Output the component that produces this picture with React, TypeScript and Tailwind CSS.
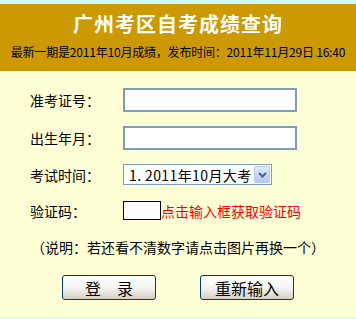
import React from "react";

const font = { fontFamily: '"Noto Sans CJK SC", "Noto Sans", sans-serif' };

function Label({ children }: { children: React.ReactNode }) {
  return <span className="w-[93px] shrink-0 text-[14px] leading-none text-black">{children}</span>;
}

function XpButton({ children }: { children: React.ReactNode }) {
  return (
    <button
      type="button"
      className="flex h-[25px] w-[94px] items-center justify-center rounded-[3px] border border-[#003c74] bg-gradient-to-b from-[#ffffff] via-[#f4f4f0] to-[#d6d0c5] text-[16px] leading-none text-black"
    >
      {children}
    </button>
  );
}

export default function App() {
  return (
    <div className="flex h-[319px] w-[356px] flex-col bg-[#ccfcfa]" style={font}>
      <div className="h-[4px]" />
      <header className="flex h-[67px] flex-col items-center bg-[#cc9900] pt-[10px]">
        <h1 className="text-[20px] font-bold leading-[20px] tracking-[1px] text-white">广州考区自考成绩查询</h1>
        <p className="mt-[12px] text-[12px] leading-[12px] tracking-[-0.2px] text-black">
          最新一期是2011年10月成绩，发布时间：2011年11月29日 16:40
        </p>
      </header>
      <main className="flex h-[246px] flex-col bg-[#ffffd6]">
        <div className="flex flex-col pl-[30px] pt-[17px]">
          <div className="flex h-[24px] items-center">
            <Label>准考证号：</Label>
            <input className="h-[24px] w-[174px] border-2 border-[#7f9db9] bg-white outline-none" />
          </div>
          <div className="mt-[14px] flex h-[24px] items-center">
            <Label>出生年月：</Label>
            <input className="h-[24px] w-[174px] border-2 border-[#7f9db9] bg-white outline-none" />
          </div>
          <div className="mt-[14px] flex h-[21px] items-center">
            <Label>考试时间：</Label>
            <div className="flex h-[21px] w-[149px] items-center border border-[#7f9db9] bg-white pl-[5px] pr-[1px]">
              <span className="flex-1 text-[14px] leading-none tracking-[0.4px] text-black">1. 2011年10月大考</span>
              <span className="flex h-[17px] w-[16px] items-center justify-center rounded-[2px] border border-[#b6c8f2] bg-gradient-to-b from-[#dfe8fd] to-[#b4c8f5]">
                <svg width="9" height="6" viewBox="0 0 9 6">
                  <path d="M1 1 L4.5 4.5 L8 1" fill="none" stroke="#4d6185" strokeWidth="2" />
                </svg>
              </span>
            </div>
          </div>
          <div className="mt-[16px] flex h-[19px] items-center">
            <Label>验证码：</Label>
            <input className="h-[19px] w-[38px] border border-black bg-white outline-none" />
            <span className="text-[14px] leading-none text-[#ff0000]">点击输入框获取验证码</span>
          </div>
        </div>
        <p className="mt-[20px] text-center text-[14px] leading-[14px] text-black">
          （说明：若还看不清数字请点击图片再换一个）
        </p>
        <div className="mt-[21px] flex justify-center gap-[44px]">
          <XpButton>登　录</XpButton>
          <XpButton>重新输入</XpButton>
        </div>
      </main>
    </div>
  );
}
